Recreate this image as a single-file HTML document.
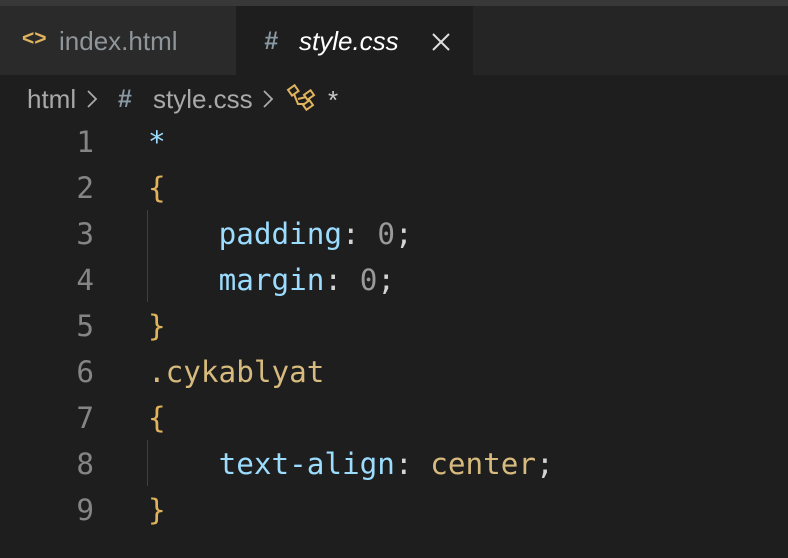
<!DOCTYPE html>
<html><head><style>
body{margin:0;width:788px;height:558px;background:#1e1e1e;overflow:hidden;position:relative;font-family:"Liberation Sans",sans-serif}
.top{position:absolute;left:0;top:0;width:788px;height:6px;background:#383838}
.bar{position:absolute;left:0;top:6px;width:788px;height:69px;background:#252526}
.t1{position:absolute;left:0;top:6px;width:236px;height:69px;background:#2a2a2a}
.t2{position:absolute;left:236px;top:6px;width:237px;height:69px;background:#1e1e1e}
.txt{position:absolute;font-size:26px;white-space:pre}
.code{position:absolute;left:148px;font-family:"DejaVu Sans Mono",monospace;font-size:29.3px;white-space:pre;line-height:46px}
.ln{position:absolute;left:0;width:94px;text-align:right;font-family:"DejaVu Sans Mono",monospace;font-size:29.3px;color:#858585;line-height:46px}
.p{color:#9cdcfe}.y{color:#d7ba7d}.b{color:#e0b45c}.g{color:#9a9a9a}.w{color:#d4d4d4}
.guide{position:absolute;left:147px;width:1px;background:#404040}
</style></head><body>
<div class="top"></div><div class="bar"></div><div class="t1"></div><div class="t2"></div>
<div class="txt" style="left:22px;top:27px;color:#e0b45c;font-size:21px;font-weight:bold">&lt;&gt;</div>
<div class="txt" style="left:59px;top:26px;color:#8f969a">index.html</div>
<div class="txt" style="left:264px;top:27px;color:#8a9aa5;font-style:italic;font-size:25px;font-weight:bold">#</div>
<div class="txt" style="left:299px;top:26px;color:#ffffff;font-style:italic">style.css</div>
<svg style="position:absolute;left:432px;top:33px" width="18" height="18"><path d="M1 1L17 17M17 1L1 17" stroke="#ddd" stroke-width="2"/></svg>
<div class="txt" style="left:27px;top:84px;color:#a9a9a9">html</div>
<svg style="position:absolute;left:86px;top:89px" width="12" height="20"><path d="M2 2L10 10L2 18" stroke="#aaa" stroke-width="1.8" fill="none"/></svg>
<div class="txt" style="left:118px;top:85px;color:#8a9aa5;font-size:25px;font-weight:bold">#</div>
<div class="txt" style="left:153px;top:84px;color:#a9a9a9">style.css</div>
<svg style="position:absolute;left:262px;top:89px" width="12" height="20"><path d="M2 2L10 10L2 18" stroke="#aaa" stroke-width="1.8" fill="none"/></svg>
<svg style="position:absolute;left:286px;top:84px" width="30" height="28" fill="none" stroke="#e0b45c" stroke-width="2"><rect x="3" y="3" width="8" height="7" transform="rotate(-35 7 6)"/><rect x="18" y="18" width="8" height="6" transform="rotate(-35 22 21)"/><rect x="19" y="8" width="8" height="6" transform="rotate(-35 23 11)"/><path d="M8 10L12 20L18 20M12 15L20 13"/></svg>
<div class="txt" style="left:328px;top:85px;color:#c8c8c8">*</div>
<div class="guide" style="top:210px;height:92px"></div>
<div class="guide" style="top:440px;height:46px"></div>
<div class="ln" style="top:119px">1<br>2<br>3<br>4<br>5<br>6<br>7<br>8<br>9</div>
<div class="code" style="top:119px"><span class="p">*</span>
<span class="b">{</span>
    <span class="p">padding</span><span class="w">:</span> <span class="g">0</span><span class="w">;</span>
    <span class="p">margin</span><span class="w">:</span> <span class="g">0</span><span class="w">;</span>
<span class="b">}</span>
<span class="y">.cykablyat</span>
<span class="b">{</span>
    <span class="p">text-align</span><span class="w">:</span> <span class="y">center</span><span class="w">;</span>
<span class="b">}</span></div>
</body></html>
